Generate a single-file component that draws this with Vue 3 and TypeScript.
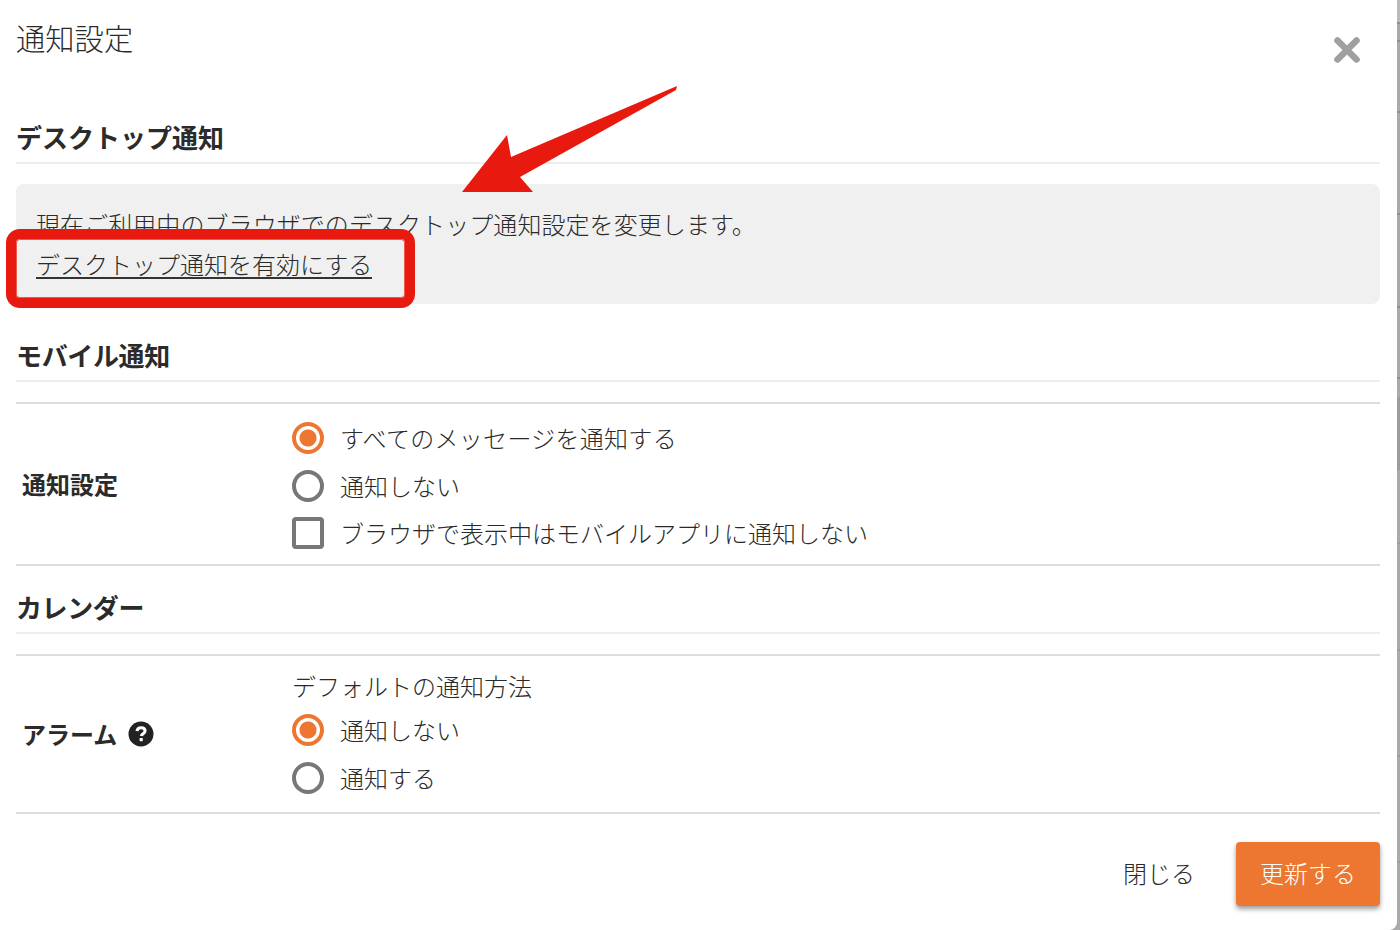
<script setup lang="ts">
const mobile = [
  { type: 'radio', on: true, label: 'すべてのメッセージを通知する', wide: true },
  { type: 'radio', on: false, label: '通知しない', wide: false },
  { type: 'check', on: false, label: 'ブラウザで表示中はモバイルアプリに通知しない', wide: false },
]
const alarm = [
  { type: 'radio', on: true, label: '通知しない' },
  { type: 'radio', on: false, label: '通知する' },
]
</script>

<template>
  <div class="screen">
    <div class="modal">
      <header class="head">
        <h1>通知設定</h1>
        <svg class="close" viewBox="0 0 26 26" width="26" height="26">
          <path d="M3.5 3.5L22.5 22.5M22.5 3.5L3.5 22.5" stroke="#a0a0a0" stroke-width="6.6" stroke-linecap="round" fill="none" />
        </svg>
      </header>

      <h2 class="sec first">デスクトップ通知</h2>
      <div class="desk">
        <p>現在ご利用中のブラウザでのデスクトップ通知設定を変更します。</p>
        <a>デスクトップ通知を有効にする</a>
        <div class="callout"></div>
      </div>

      <h2 class="sec second">モバイル通知</h2>
      <div class="row mobile">
        <div class="label">通知設定</div>
        <div class="opts">
          <div v-for="o in mobile" :key="o.label" class="opt" :class="{ 'opt-check': o.type === 'check' }">
            <span :class="[o.type, { on: o.on }]"></span>
            <span class="txt" :class="{ wide: o.wide }">{{ o.label }}</span>
          </div>
        </div>
      </div>

      <h2 class="sec third">カレンダー</h2>
      <div class="row alarm">
        <div class="label">
          <span class="alarm-name">アラーム</span>
          <svg class="help" viewBox="0 0 26 26" width="26" height="26">
            <circle cx="13" cy="13" r="12.5" fill="#222" />
            <path d="M9 10.2C9.2 7.9 11 6.8 13.1 6.8C15.4 6.8 17.1 8.1 17.1 10.1C17.1 12.6 13.6 12.7 13.3 15" stroke="#fff" stroke-width="3" fill="none" />
            <rect x="11.6" y="17" width="3.2" height="3.2" rx=".6" fill="#fff" />
          </svg>
        </div>
        <div class="opts">
          <div class="sub">デフォルトの通知方法</div>
          <div v-for="o in alarm" :key="o.label" class="opt">
            <span :class="[o.type, { on: o.on }]"></span>
            <span class="txt">{{ o.label }}</span>
          </div>
        </div>
      </div>

      <footer class="foot">
        <span class="cancel">閉じる</span>
        <span class="submit">更新する</span>
      </footer>

      <svg class="arrow" viewBox="0 0 240 120" width="240" height="120">
        <path d="M217 0L51 71L47 49L2 106L73 106L60 91L216 4Z" fill="#e8190e" />
      </svg>
    </div>
  </div>
</template>

<style>
html, body { margin: 0; background: #aaa; }
</style>

<style scoped>
.screen {
  width: 1400px;
  height: 930px;
  overflow: hidden;
  font-family: "Noto Sans CJK JP", "Noto Sans", sans-serif;
  color: #2a2a2a;
  background: linear-gradient(to bottom,
    #bbb 0 22px, #8f8f8f 22px 24px, #aaa 24px 40px, #8f8f8f 40px 42px,
    #aaa 42px 111px, #8f8f8f 111px 113px, #aaa 113px 213px, #8f8f8f 213px 215px,
    #aaa 215px 306px, #8f8f8f 306px 308px, #aaa 308px 377px, #8f8f8f 377px 379px,
    #aaa 379px 397px, #9c9c9c 397px 470px, #aaa 470px 542px, #9c9c9c 542px 544px,
    #aaa 544px 649px, #9c9c9c 649px 651px, #aaa 651px 755px, #9c9c9c 755px 757px,
    #aaa 757px 861px, #9c9c9c 861px 863px, #aaa 863px 930px);
}
.modal {
  position: relative;
  box-sizing: border-box;
  width: 1397px;
  height: 930px;
  padding: 0 17px 0 16px;
  background: #fff;
  border-bottom-right-radius: 8px;
}
.head {
  display: flex;
  justify-content: space-between;
  height: 96px;
}
h1 {
  margin: 16px 0 0;
  font-size: 29.3px;
  line-height: 42px;
  font-weight: 300;
}
.close { margin: 37px 20px 0 0; }
.sec {
  margin: 0;
  box-sizing: border-box;
  font-size: 26px;
  line-height: 36px;
  font-weight: 700;
  color: #2b2b2b;
  border-bottom: 2px solid #eee;
}
.sec.first { height: 68px; padding-top: 23px; }
.desk {
  position: relative;
  box-sizing: border-box;
  height: 120px;
  margin-top: 20px;
  padding: 20px 20px;
  background: #f0f0f0;
  border-radius: 8px;
  font-size: 24px;
  line-height: 40px;
  font-weight: 300;
}
.desk p { margin: 0; letter-spacing: .07px; }
.desk a {
  display: inline-block;
  line-height: 32px;
  margin-top: 4px;
  border-bottom: 2px solid #333;
  height: 29px;
  position: relative;
  z-index: 2;
}
.callout {
  position: absolute;
  left: -10px;
  top: 45px;
  width: 409px;
  height: 79px;
  border: 10px solid #e8190e;
  border-radius: 14px;
  box-sizing: border-box;
  box-shadow: inset 0 0 0 1px #ec5a50;
}
.sec.second { height: 78px; padding-top: 33px; letter-spacing: -.35px; }
.row {
  display: flex;
  align-items: center;
  border-top: 2px solid #ddd;
  border-bottom: 2px solid #ddd;
  box-sizing: border-box;
}
.row.mobile { margin-top: 20px; height: 164px; }
.row.mobile .opts { margin-top: 3px; }
.row.mobile .label { margin-top: -2px; }
.row.alarm { margin-top: 20px; height: 160px; }
.label {
  width: 276px;
  padding-left: 6px;
  box-sizing: border-box;
  font-size: 24px;
  font-weight: 700;
  display: flex;
  align-items: center;
  gap: 11px;
  color: #2b2b2b;
}
.alarm-name { margin-bottom: 2px; }
.opts { display: flex; flex-direction: column; }
.opt {
  display: flex;
  align-items: center;
  gap: 16px;
  height: 48px;
  font-size: 24px;
  font-weight: 300;
}
.opt-check { margin-top: -1px; }
.txt { padding-bottom: 2px; }
.wide { letter-spacing: .29px; }
.sub { font-size: 24px; font-weight: 300; line-height: 36px; margin: 2px 0; }
.radio {
  box-sizing: border-box;
  width: 32px;
  height: 32px;
  border-radius: 50%;
  border: 4px solid #777;
  background: #fff;
}
.radio.on {
  border-color: #ed7730;
  background: radial-gradient(circle, #ed7730 0 8px, #fff 9px);
}
.check {
  box-sizing: border-box;
  width: 32px;
  height: 32px;
  border-radius: 4px;
  border: 4px solid #777;
}
.sec.third { height: 68px; padding-top: 23px; letter-spacing: -.4px; }
.foot {
  display: flex;
  justify-content: flex-end;
  align-items: center;
  margin-top: 28px;
}
.cancel { font-size: 24px; font-weight: 300; margin-right: 41px; padding-bottom: 3px; }
.submit {
  box-sizing: border-box;
  display: flex;
  align-items: center;
  justify-content: center;
  width: 144px;
  height: 64px;
  padding-bottom: 3px;
  background: #ed7730;
  color: #fff;
  border-radius: 4px;
  font-size: 24px;
  font-weight: 300;
  box-shadow: 0 3px 5px rgba(0,0,0,.4);
}
.arrow {
  position: absolute;
  left: 460px;
  top: 86px;
}
</style>
